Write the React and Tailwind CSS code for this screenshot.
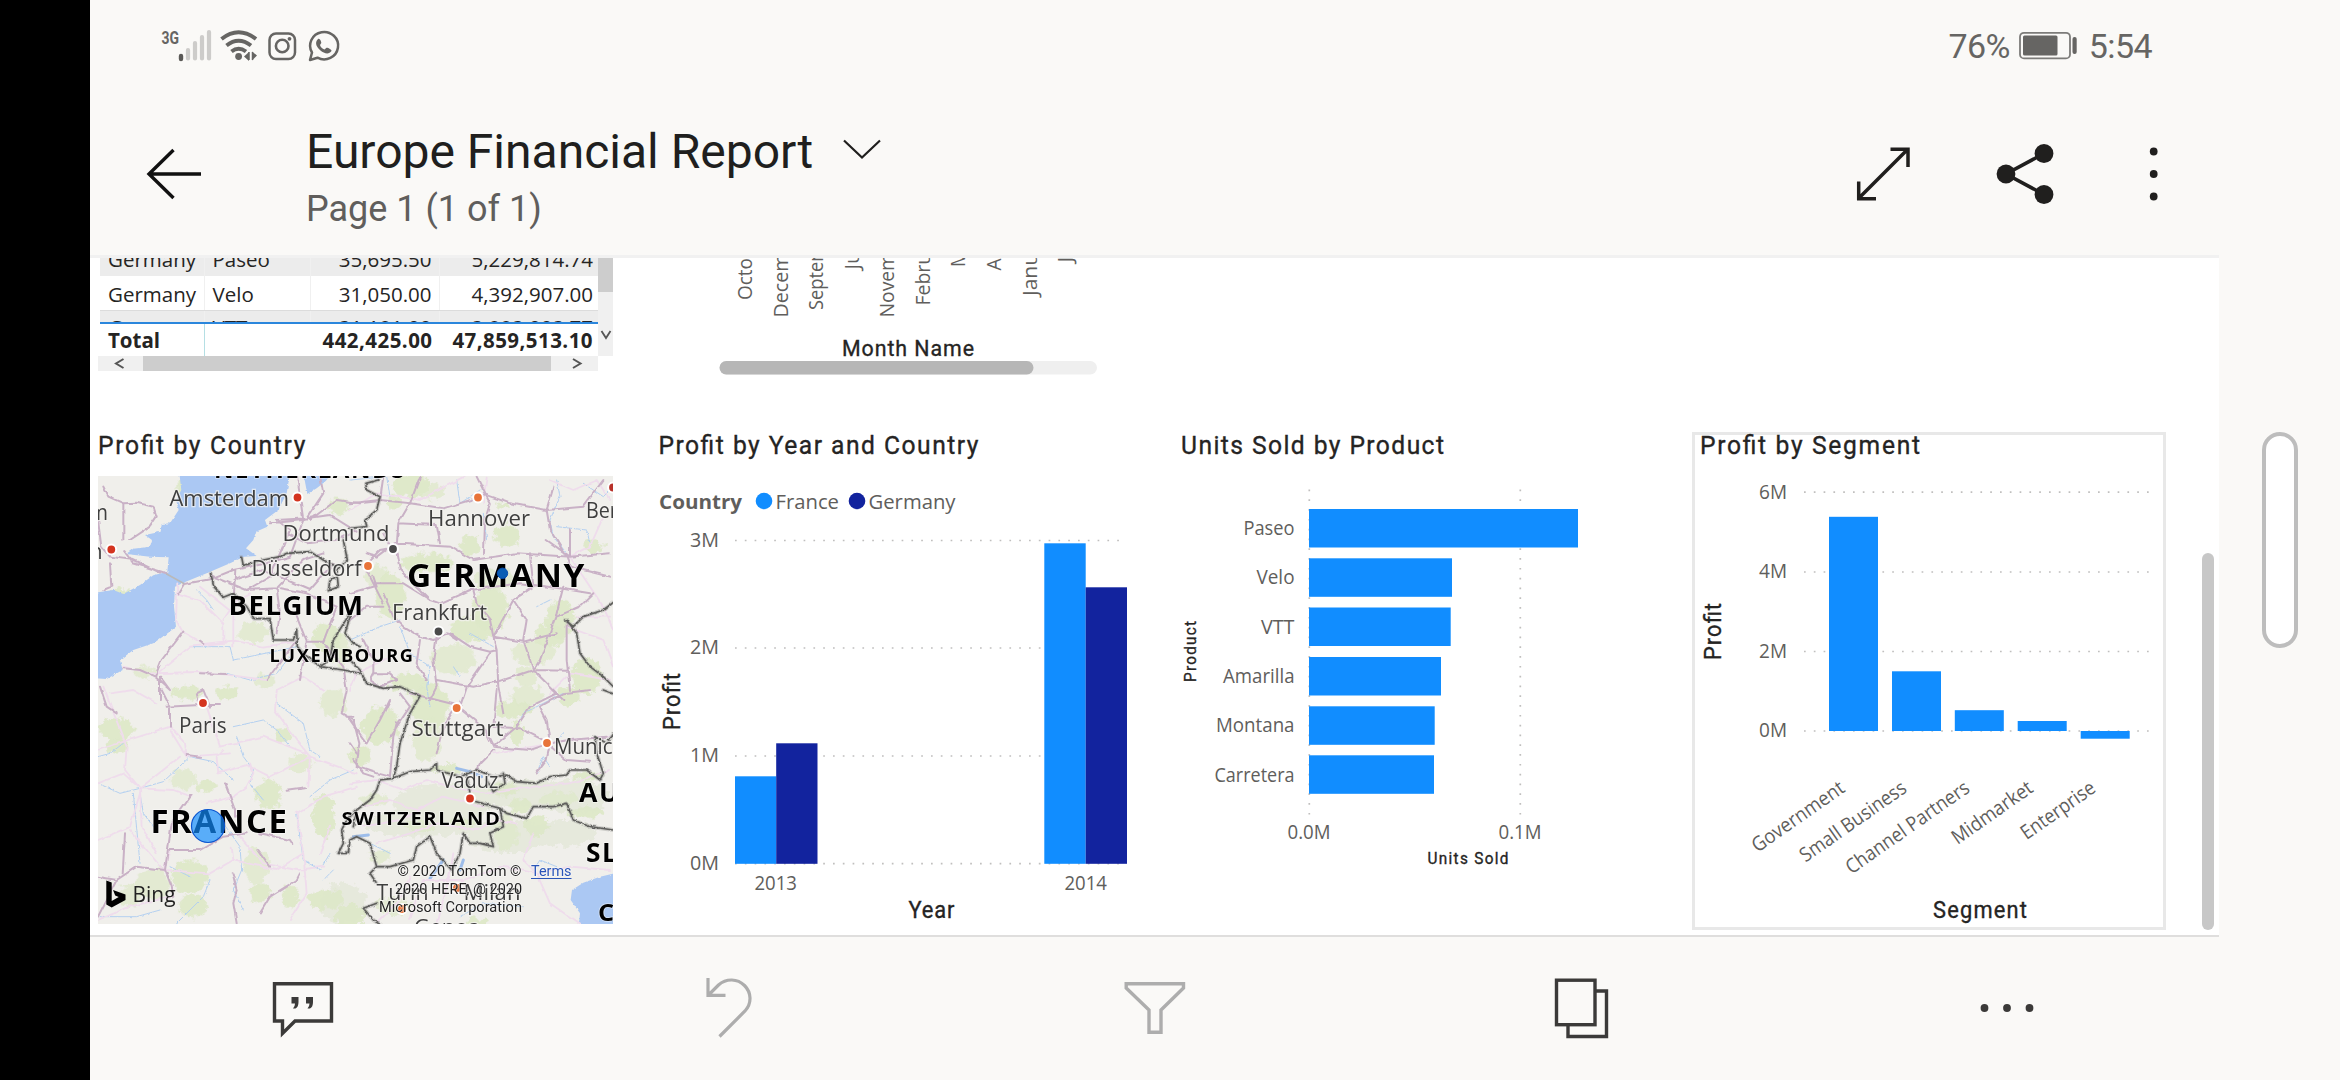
import React from "react";

const SEGOE = '"Open Sans", "Noto Sans", sans-serif';
const DIN = 'Roboto, "Liberation Sans", sans-serif';

/* Chart label: x is the left edge (or right edge when end is set), w the drawn width. */
function Label({ x, y, w, size = 20, color = "#605e5c", font = SEGOE, weight = 400, end, rotate, children }) {
  return (
    <text
      x={x}
      y={y}
      textLength={w}
      lengthAdjust="spacingAndGlyphs"
      fontSize={size}
      fill={color}
      fontFamily={font}
      fontWeight={weight}
      textAnchor={end ? "end" : "start"}
      transform={rotate ? `rotate(${rotate} ${x} ${y})` : undefined}
    >
      {children}
    </text>
  );
}

/* Headings and axis titles: narrow letters with open spacing. */
function Heading({ x, y, w, size = 26.5, rotate, children }) {
  const k = 0.93;
  return (
    <text
      transform={`translate(${x} ${y})${rotate ? ` rotate(${rotate})` : ""} scale(${k} 1)`}
      textLength={w / k}
      lengthAdjust="spacing"
      fontSize={size}
      fill="#252423"
      stroke="#252423"
      strokeWidth="0.35"
      fontFamily={DIN}
    >
      {children}
    </text>
  );
}

function Grid({ x1, y1, x2, y2 }) {
  return <line x1={x1} y1={y1} x2={x2} y2={y2} stroke="#c0bfbe" strokeWidth="1.7" strokeDasharray="1.7 8.1" />;
}

/* ---------- Status bar ---------- */

function StatusIcons() {
  return (
    <svg width="184" height="36" viewBox="160 28 184 36" fill="none">
      <text x="161.500" y="43.500" fontSize="18.500" fontWeight="700" fill="#666563" fontFamily={DIN} textLength="17.500" lengthAdjust="spacingAndGlyphs">3G</text>
      <path d="M181 56v3" stroke="#5a5957" strokeWidth="4.4" strokeLinecap="round" />
      <path d="M188 50v8.5M195 43v15.5M202 37v21.5M209 32v26.5" stroke="#cdccca" strokeWidth="4.2" strokeLinecap="round" />
      <g stroke="#666563" strokeWidth="4">
        <path d="M221.500 39q17-13.500 34.500 0" />
        <path d="M226.500 45.500q12-9.500 24.500 0" />
        <path d="M231.500 51.500q7-5.500 14.500 0" />
      </g>
      <circle cx="238.600" cy="56.500" r="3.400" fill="#666563" />
      <path d="M244 56.500l5-4.500v9zM257 55.500l-5-4v9z" fill="#666563" />
      <path d="M249 52v8M252.500 52v8" stroke="#666563" strokeWidth="1.500" />
      <rect x="269.500" y="33.500" width="25.500" height="25.500" rx="6.500" stroke="#666563" strokeWidth="2.500" />
      <circle cx="282.200" cy="46" r="6.300" stroke="#666563" strokeWidth="2.600" />
      <circle cx="289.500" cy="38.800" r="1.900" fill="#666563" />
      <path d="M310 60l2-7.500a14 13.700 0 1 1 5.500 5.200z" stroke="#666563" strokeWidth="2.500" strokeLinejoin="round" />
      <path d="M318 39c-4 4-1 8.500 2.500 11.500s8.500 4.500 11 .5c.5-1.200-3.500-3.500-5-3.200l-2 1.700c-2.200-.8-4-2.500-4.500-4.500l1.300-2c0-1.500-1.500-5-3.300-4z" fill="#666563" />
    </svg>
  );
}

function StatusBar() {
  return (
    <div className="flex h-[92px] items-start justify-between pl-[70px] pr-[67px] text-[#666563]">
      <div className="pt-7">
        <StatusIcons />
      </div>
      <div className="flex items-center pt-[26px] text-[34px] leading-10 tracking-[-0.6px]">
        <span>76%</span>
        <svg className="ml-[9px] mr-3" width="58" height="30" viewBox="2020 31 58 30" fill="none">
          <rect x="2021" y="32.800" width="50" height="25.600" rx="4" stroke="#7c7b79" strokeWidth="1.800" />
          <rect x="2024" y="35.500" width="34.500" height="20" rx="1.500" fill="#666563" />
          <rect x="2073.500" y="37" width="4.200" height="17" rx="2" fill="#666563" />
        </svg>
        <span>5:54</span>
      </div>
    </div>
  );
}

/* ---------- Header ---------- */

function Header() {
  return (
    <header className="flex h-[163px] items-start pl-[56px]">
      <svg className="mt-[54px]" width="56" height="56" viewBox="146 146 56 56" fill="none" stroke="#111" strokeWidth="3.4">
        <path d="M201 174H149M173.500 150l-24.500 24 24.500 24" />
      </svg>
      <div className="ml-[104px] pt-8">
        <div className="flex items-start">
          <h1 className="text-[48px] font-normal leading-[56px] text-[#201f1e]">Europe Financial Report</h1>
          <svg className="ml-7 mt-[14px]" width="40" height="22" viewBox="841 138 40 22" fill="none" stroke="#201f1e" strokeWidth="2.2">
            <path d="M844 140.500l18 17 18-17" />
          </svg>
        </div>
        <p className="mt-[6px] text-[36px] leading-[46px] text-[#605e5c]">Page 1 (1 of 1)</p>
      </div>
      <div className="ml-auto mr-[59px] mt-[50px] flex items-center text-[#201f1e]">
        <svg width="56" height="64" viewBox="1855 142 56 64" fill="none" stroke="currentColor" strokeWidth="3.500">
          <path d="M1859 198l49-49M1890.500 149.200H1908V167M1858.700 181.500v17.300H1876" />
        </svg>
        <svg className="ml-[84px]" width="60" height="64" viewBox="1995 142 60 64" fill="currentColor">
          <path d="M2044 153.500L2006 174l38 20.500" fill="none" stroke="currentColor" strokeWidth="3.600" />
          <circle cx="2044" cy="153.500" r="9.400" />
          <circle cx="2006" cy="174" r="9.400" />
          <circle cx="2044" cy="194.500" r="9.400" />
        </svg>
        <svg className="ml-[93px]" width="12" height="64" viewBox="2148 142 12 64" fill="currentColor">
          <circle cx="2153.700" cy="151.500" r="3.900" />
          <circle cx="2153.700" cy="174" r="3.900" />
          <circle cx="2153.700" cy="196.500" r="3.900" />
        </svg>
      </div>
    </header>
  );
}

/* ---------- Table ---------- */

const cols = "grid grid-cols-[104.500px_106px_129px_158.500px] text-[20.500px]";

function Row({ cells, className }) {
  return (
    <div className={`${cols} ${className}`}>
      <span className="border-r border-[#f0f0f0] pl-2">{cells[0]}</span>
      <span className="border-r border-[#f0f0f0] pl-2">{cells[1]}</span>
      <span className="border-r border-[#f0f0f0] pr-[7px] text-right">{cells[2]}</span>
      <span className="pr-[5px] text-right">{cells[3]}</span>
    </div>
  );
}

function FinanceTable() {
  return (
    <div className="h-[174px] w-[515px] font-['Open_Sans','Noto_Sans',sans-serif] text-[#252423]">
      <div className="flex h-[98px]">
        <div className="ml-[2px] flex w-[498px] flex-col overflow-hidden">
          <div className="flex h-[18px] shrink-0 items-end overflow-hidden bg-[#ececec]">
            <Row className="h-[35px] shrink-0 leading-[36px]" cells={["Germany", "Paseo", "35,695.50", "5,229,814.74"]} />
          </div>
          <Row className="h-[34px] shrink-0 leading-[36px]" cells={["Germany", "Velo", "31,050.00", "4,392,907.00"]} />
          <div className="h-3 shrink-0 overflow-hidden border-t border-[#dcdcdc] bg-[#ececec]">
            <Row className="h-[35px] leading-[32px]" cells={["Germany", "VTT", "31,181.00", "3,883,003.77"]} />
          </div>
          <div className="h-[2px] shrink-0 bg-[#2b86dc]" />
          <div className="grid h-8 shrink-0 grid-cols-[104.500px_235px_158.500px] text-[20.500px] font-bold leading-[33px]">
            <span className="border-r border-[#b5dfe4] pl-2">Total</span>
            <span className="pr-[7px] text-right tracking-[0.450px]">442,425.00</span>
            <span className="pr-[5px] text-right tracking-[0.450px]">47,859,513.10</span>
          </div>
        </div>
        <div className="flex w-[15px] flex-col items-center bg-[#f0f0f0]">
          <div className="h-[34px] w-full bg-[#cdcdcd]" />
          <svg className="mt-9" width="12" height="14" viewBox="0 0 12 14" fill="none" stroke="#555" strokeWidth="1.800">
            <path d="M1.500 3l4.500 7 4.500-7" />
          </svg>
        </div>
      </div>
      <div className="flex h-[15px] w-[500px] items-center bg-[#f0f0f0]">
        <svg width="44.500" height="15" viewBox="0 0 44.500 15" fill="none" stroke="#555" strokeWidth="2">
          <path d="M25.500 3l-7.500 4.500 7.500 4.500" />
        </svg>
        <div className="h-full w-[408.500px] bg-[#cdcdcd]" />
        <svg width="47" height="15" viewBox="0 0 47 15" fill="none" stroke="#555" strokeWidth="2">
          <path d="M22 3l7.500 4.500L22 12" />
        </svg>
      </div>
    </div>
  );
}

/* ---------- Month axis ---------- */

const months = [
  ["October", 752, 300, 72], ["December", 787.500, 317.500, 95], ["September", 823, 310, 94], ["June", 858.500, 269.500, 42],
  ["November", 893.500, 317.500, 95], ["February", 929.500, 305.500, 81], ["March", 965, 267, 55], ["August", 1000.500, 270.500, 62],
  ["January", 1036.500, 296, 74], ["July", 1071.500, 262.500, 35],
];

function MonthAxis() {
  return (
    <svg width="520" height="174" viewBox="653 258 520 174">
      {months.map(([m, x, y, w]) => (
        <Label key={m} x={x} y={y} w={w} rotate={-90}>{m}</Label>
      ))}
      <Heading x={842} y={356} w={132} size={23}>Month Name</Heading>
      <rect x="719.500" y="361" width="377.500" height="13.500" rx="6.700" fill="#efefef" />
      <rect x="719.500" y="361" width="314" height="13.500" rx="6.700" fill="#b6b6b6" />
    </svg>
  );
}

/* ---------- Map ---------- */

const dots = [
  [297.500, 497.500, "#d4341f"], [111.300, 549.500, "#d4341f"], [393, 549, "#4a4a4a"], [368, 566, "#e8743a"], [478, 497.500, "#e8743a"],
  [613, 487.500, "#b8322a"], [438.500, 631.500, "#4a4a4a"], [203, 703, "#d4341f"], [456.700, 708, "#e8743a"], [547, 743, "#e8743a"],
  [470, 798.500, "#d4341f"], [457, 888, "#e8743a"], [402, 909, "#e8743a"],
];

const cities = [
  ["Amsterdam", 169.500, 506, 119.500], ["Dortmund", 282.500, 540.500, 107], ["Düsseldorf", 251.500, 575.500, 110], ["Hannover", 428, 525.500, 102],
  ["Berlin", 586, 517.500, 54], ["Frankfurt", 392, 619.500, 95], ["Paris", 179, 732.500, 47.500], ["Stuttgart", 411.500, 736, 92], ["Munich", 554, 753.500, 71],
  ["Vaduz", 441.500, 788, 57], ["Turin", 376.500, 899.500, 52], ["Milan", 463.500, 899.500, 57], ["Genoa", 414, 935, 66],
];

const countries = [
  ["NETHERLANDS", 214, 477.500, 192, 24], ["BELGIUM", 228.500, 614.500, 136, 27], ["LUXEMBOURG", 269.500, 662, 145, 17.500],
  ["GERMANY", 407, 586.500, 179, 31.500], ["FRANCE", 150.500, 833, 138, 31.500], ["SWITZERLAND", 341.500, 824.800, 160, 18],
  ["AUSTRIA", 579, 802, 124, 27], ["SLOVENIA", 586, 862, 142, 27], ["CROATIA", 598, 921, 122, 23],
];

const forests = [
  [480, 510, 40, 28], [700, 525, 38, 40], [735, 130, 28, 22], [155, 630, 30, 16], [280, 690, 42, 18], [85, 388, 26, 12], [515, 655, 25, 20], [400, 690, 30, 16],
  [265, 70, 14, 20], [740, 560, 26, 46], [950, 70, 50, 30], [900, 120, 22, 18], [1010, 85, 40, 22], [1240, 220, 34, 30], [1130, 250, 26, 30],
  [1200, 350, 60, 28], [1000, 300, 70, 26], [890, 400, 40, 60], [850, 340, 30, 30], [1190, 440, 50, 60], [1140, 500, 60, 34], [1080, 590, 60, 40],
  [1230, 130, 16, 10], [1500, 250, 26, 18], [1320, 570, 56, 32], [1400, 470, 40, 50], [1370, 520, 44, 30], [1300, 640, 30, 26], [1480, 640, 40, 48],
  [950, 660, 54, 24], [1300, 700, 44, 30], [1260, 740, 50, 24], [1010, 730, 50, 60], [1000, 830, 40, 60], [860, 790, 50, 50], [1430, 700, 30, 26],
  [720, 720, 36, 34], [70, 800, 46, 30], [70, 850, 30, 20], [270, 950, 36, 26], [340, 970, 30, 16], [525, 995, 36, 40], [620, 900, 34, 26],
  [570, 820, 26, 18], [690, 1060, 30, 60], [180, 1260, 46, 40], [290, 1240, 50, 44], [300, 1330, 40, 30], [490, 1210, 34, 50], [500, 1290, 26, 26],
  [590, 1300, 22, 30], [110, 1300, 30, 30], [700, 1310, 50, 26], [770, 1360, 40, 30], [840, 1010, 40, 16], [800, 880, 30, 26], [1060, 920, 40, 14],
  [1240, 1110, 30, 50], [1330, 1090, 36, 26], [1230, 980, 40, 16], [1400, 1010, 50, 18], [1480, 1050, 50, 14], [1280, 1030, 30, 20], [860, 1180, 30, 20],
  [1480, 940, 40, 12], [1270, 810, 20, 34], [900, 1330, 50, 24], [1150, 1380, 30, 12], [1110, 1080, 34, 12], [980, 1090, 40, 14],
];

const sea =
  "M268 40L274 90 258 120 266 150 240 190 215 192 212 215 165 225 186 240 180 260 130 266 108 282 180 290 236 292 232 335 190 346 150 375 100 402 70 390 15 398 15 655 50 657 98 630 90 600 130 570 190 550 230 522 258 500 252 440 255 380 280 368 350 340 420 310 462 290 500 288 468 265 490 240 498 215 532 200 525 180 565 150 590 100 600 40Z M640 40L730 40 704 66 680 85 652 102Z M1575 1240L1530 1250 1480 1268 1446 1290 1442 1320 1470 1360 1466 1400 1575 1400Z";

const minorRoads =
  "M262 370L258 480 278 515 340 552 430 542 520 560 620 545 M330 380L430 460 430 560 M400 480L440 420 480 400 M260 400L330 420 400 490 400 540 M100 620L180 640 320 636 410 644 530 660 M190 650L300 560 410 548 M40 680L110 860 105 930 150 985 155 1100 200 1180 M24 970L100 940 150 985 250 990 305 1010 M24 870L240 800 285 850 290 890 M350 740L390 860 520 830 650 880 M400 870L380 890 385 940 470 915 540 950 660 890 800 940 M560 690L555 750 620 840 660 890 655 980 M480 910L490 940 470 980 430 1010 350 1030 M150 985L270 890 M24 1140L120 1100 150 1000 M120 1110L220 1230 240 1170 M220 1230L360 1240 430 1200 425 1160 M430 1200L560 1230 640 1180 620 1060 700 1010 800 980 M640 1180L650 1300 600 1380 M690 1180L720 1100 M24 1380L120 1340 240 1310 M450 1130L520 1210 620 1230 700 1220 M780 690L800 640 900 590 M780 150L860 100 990 120 1140 40 M1190 50L1180 130 M1380 60L1450 90 1520 60 1560 120 M1540 170L1500 260 1440 290 1540 440 1570 510 M1430 500L1540 540 1570 620 M1460 470L1560 470 M780 970L860 960 940 990 1010 960 1100 985 1200 1000 1330 980 1440 970 1560 930 M860 1150L960 1120 1040 1090 1160 1110 1220 1080 1280 1090 M1330 1120L1300 1200 1340 1240 1440 1220 1560 1230 M960 1380L1000 1260 1120 1260 1240 1220 1340 1240 M1040 1400L1080 1240 1090 1180 M1340 1240L1380 1330 1480 1400 M860 1390L930 1320 960 1250 M1210 880L1330 860 1440 840 1560 830 M1380 700L1440 640 1560 660 M560 690L640 650 700 690 M240 810L290 890 420 880 M60 700L130 690 200 730 M820 1040L900 1020 980 1050 1060 1010 1180 1040 M820 1100L930 1080 1010 1040";

const majorRoads =
  "M40 80L55 110 100 130 140 128 190 140 200 170 180 200 120 240 M100 130L100 240 M24 180L34 260 60 290 130 300 210 338 M60 310L64 380 40 390 M100 270L130 310 230 340 M265 400L282 372 360 358 430 330 520 312 600 290 640 180 M436 330L432 400 M360 345L470 390 560 385 570 460 560 520 M430 360L520 330 660 390 730 310 M470 390L540 350 M560 385L640 300 700 280 M570 385L650 400 740 440 M540 350L600 210 560 180 650 175 720 165 800 215 M640 180L620 40 M650 175L700 100 690 48 M640 180L540 190 M590 220L650 250 740 240 790 215 M660 180L740 120 810 130 M740 440L700 545 650 545 620 470 M650 545L630 660 M280 515L215 600 195 650 150 630 100 625 M195 650L240 690 210 650 210 720 M530 660L575 600 620 540 M340 552L330 545 M330 640L410 642 M700 550L760 620 770 690 755 760 790 780 808 850 800 920 860 940 900 950 M30 680L50 740 80 760 M230 740L330 735 390 735 M215 690L240 740 240 800 M330 740L320 700 340 690 360 740 M290 885L330 890 M405 970L420 1010 435 1050 435 1070 M590 992L645 985 M305 1005L245 1090 225 1230 245 1280 250 1310 M240 1170L330 1170 400 1130 470 1120 M508 1120L600 1140 610 1155 M98 1240L105 1120 M24 1250L80 1260 140 1220 225 1230 M24 1370L80 1260 M428 1240L440 1290 430 1330 440 1390 M630 1240L620 1260 540 1310 510 1360 M505 1170L540 1220 M790 770L770 770";

const germanRoads =
  "M780 130L870 120 960 130 1060 145 1190 105 1260 130 1370 150 1480 140 1540 60 M870 120L880 50 M990 50L960 130 925 190 920 260 870 270 820 320 M1160 50L1200 130 1185 180 1182 280 M1370 150L1385 100 1390 80 M1370 150L1380 210 1430 290 1440 320 1560 350 M1440 210L1440 290 1370 240 M925 190L1040 195 1050 250 M910 250L1080 260 1150 300 1280 280 1440 290 1560 280 M830 280L860 290 900 260 880 220 M920 280L930 330 1020 420 1050 430 1140 390 1290 370 1410 385 1500 400 M1320 280L1330 380 1300 400 1270 420 1310 480 1300 540 1330 630 1420 720 M1150 390L1160 430 1200 480 1210 530 1220 570 1225 680 1240 760 M1270 420L1210 530 1300 545 1400 520 M1420 380L1400 460 1350 600 1330 630 1430 632 M1510 400L1470 440 1400 470 M1430 490L1430 600 1440 690 M850 370L940 370 1020 420 M830 330L850 370 880 430 M850 380L780 400 M780 480L830 440 880 440 M850 350L860 380 M880 400L910 470 940 500 990 530 1030 540 1080 520 1140 560 1200 575 1220 570 M1040 530L1030 600 1040 680 1020 720 M1070 520L1100 540 M990 540L980 610 1010 660 M1200 580L1130 680 1110 740 M1040 660L1150 680 1240 660 1330 630 M840 660L850 640 900 640 920 660 870 680 840 660 M850 640L850 600 820 540 M960 700L1100 735 1180 800 1210 860 1280 800 1320 740 1400 700 M1100 735L1060 800 1040 880 M1210 860L1320 870 1380 850 1440 840 1550 830 M1210 800L1290 805 1380 850 1370 900 1340 940 M1210 870L1170 910 1160 930 M1380 850L1370 780 1350 740 1420 700 1500 690 M1370 850L1430 900 1500 905 M1220 690L1210 800 M900 830L960 740 930 700 M780 780L830 850 870 780 900 720 M790 900L820 940 850 950 M900 950L910 830 920 790 M780 850L800 880";

const rivers =
  "M108 282L150 276 190 262 M24 970L90 1000 150 985 220 965 300 890 370 905 430 960 M150 1000L160 1060 190 1100 M430 800L520 780 560 810 600 860 M440 830L460 890 490 930 480 970 520 1020 M560 730L640 790 660 870 690 890 M320 390L350 420 370 450 M410 640L480 660 560 640 600 590 M300 560L420 560 430 600 620 560 M400 1090L450 1160 455 1230 430 1290 460 1350 M620 1060L640 1200 690 1230 720 1180 M660 1010L720 960 790 930 M130 1000L150 1210 M24 890L60 880 100 850 M240 1220L300 1250 M24 1370L140 1370 210 1350 M260 1390L340 1310 360 1260 M780 60L890 50 900 110 M1100 60L1110 130 1170 90 M1180 160L1190 240 M1400 60L1410 110 1380 180 1390 230 1430 280 M1480 70L1540 110 1560 90 M1400 200L1490 210 1500 250 M780 540L870 500 930 480 M930 500L960 580 1020 620 1010 680 1020 740 M1140 520L1210 560 M1090 620L1110 650 M1340 440L1380 420 M700 1260L730 1230 M840 1150L900 1180 M1340 940L1360 890 1380 920 M1400 840L1420 820 M1280 800L1300 760 1420 700 M1330 1230L1350 1200 1400 1220 M1110 1370L1180 1330 1300 1340";

const borders =
  "M362 340L372 380 400 412 430 400 470 440 492 476 540 476 550 540 610 540 620 508 622 560 M455 292L460 316 520 300 570 290 590 280 660 275 700 300 740 320 M760 240L772 300 740 330 745 380 715 392 720 360 740 350 M780 460L730 540 720 600 690 620 760 630 810 640 M780 470L765 520 790 550 810 560 M780 205L830 200 826 180 860 150 870 110 830 90 828 70 864 60 M690 620L640 580 622 560 M780 600L810 630 830 670 880 685 930 680 990 708 960 760 930 850 920 920 910 955 870 960 860 990 840 1020 800 1050 790 1100 M1425 480L1450 500 1480 470 1540 450 1580 420 M1430 480L1460 520 1470 580 1500 620 1540 650 1580 690 M1540 690L1580 705 M1580 810L1550 850 1515 830 1520 880 1540 940 1530 960 1490 930 1440 930 1430 945 1380 950 1340 970 1280 965 1250 945 1210 950 1160 930 1110 950 1040 930 1040 910 1020 930 960 935 910 955 M1130 940L1140 1000 1140 1020 1230 1045 1250 1060 1310 1075 1330 1040 1390 1040 1430 1030 1450 1080 1500 1100 1570 1110 M1240 940L1245 970 1210 995 1190 960 M1230 1045L1240 1100 1200 1120 1210 1160 1170 1150 1140 1150 1120 1120 1110 1180 1085 1230 1040 1180 1020 1130 980 1160 970 1200 900 1220 860 1220 840 1150 800 1130 780 1140 M800 1050L770 1080 755 1110 760 1150 745 1180 775 1180 780 1140 M860 1220L840 1240 860 1270 M860 1330L820 1345 850 1380 880 1400";

const ridges = [
  [1060, 1030, 150, 60], [1000, 1090, 180, 40], [1300, 1000, 170, 40], [1450, 1010, 110, 50], [1250, 1130, 120, 50], [760, 1330, 70, 60], [1420, 1120, 100, 40],
];

function MapVisual() {
  return (
    <svg width="515" height="448" viewBox="98 476 515 448" className="mt-1">
      <defs>
        <filter id="coast" x="-5%" y="-5%" width="110%" height="110%">
          <feTurbulence type="fractalNoise" baseFrequency="0.09" numOctaves="3" seed="4" result="n" />
          <feDisplacementMap in="SourceGraphic" in2="n" scale="8" xChannelSelector="R" yChannelSelector="G" />
        </filter>
        <filter id="wood" x="-5%" y="-5%" width="110%" height="110%">
          <feTurbulence type="fractalNoise" baseFrequency="0.05" numOctaves="4" seed="9" result="n" />
          <feDisplacementMap in="SourceGraphic" in2="n" scale="34" xChannelSelector="R" yChannelSelector="G" />
        </filter>
        <filter id="road" x="-5%" y="-5%" width="110%" height="110%">
          <feTurbulence type="fractalNoise" baseFrequency="0.035" numOctaves="2" seed="2" result="n" />
          <feDisplacementMap in="SourceGraphic" in2="n" scale="11" xChannelSelector="R" yChannelSelector="G" />
        </filter>
      </defs>
      <rect x="98" y="476" width="515" height="448" fill="#f0efeb" />
      <g transform="translate(90 460) scale(.33333)" fill="none" strokeLinejoin="round" strokeLinecap="round">
        <g filter="url(#wood)" fill="#e6e9dc">
          {ridges.map(([x, y, rx, ry]) => (
            <ellipse key={`${x}-${y}`} cx={x} cy={y} rx={rx} ry={ry} />
          ))}
        </g>
        <g filter="url(#wood)" fill="#dde8c8">
          {forests.map(([x, y, rx, ry], i) => (
            <ellipse key={i} cx={x + 10} cy={y + 8} rx={rx * 1.12} ry={ry * 1.12} opacity={i % 3 ? 0.95 : 0.7} />
          ))}
        </g>
        <path d={rivers} stroke="#b4d0f0" strokeWidth="3" filter="url(#coast)" />
        <path d={sea} fill="#abc8f3" filter="url(#coast)" />
        <path d="M1100 925L1140 935 1175 950 M1020 1255L1060 1200 M790 1130L835 1125 M1120 1200L1110 1230" stroke="#9dbdea" strokeWidth="9" />
        <g filter="url(#road)">
          <path d={minorRoads} stroke="#efdcec" strokeWidth="5.500" />
          <path d={majorRoads} stroke="#c9b1c6" strokeWidth="6" />
          <path d={germanRoads} stroke="#c9b1c6" strokeWidth="6" />
        </g>
        <path d="M230 342L280 370" stroke="#b9b9b9" strokeWidth="5" />
        <g filter="url(#coast)">
          <path d={borders} stroke="#8b8b89" strokeOpacity=".35" strokeWidth="12" />
          <path d={borders} stroke="#5f5f5d" strokeWidth="5" />
        </g>
      </g>
      {dots.map(([x, y, c]) => (
        <circle key={`${x}-${y}`} cx={x} cy={y} r="4.900" fill={c} stroke="#fff" strokeWidth="2" />
      ))}
      <g stroke="#f4f3f0" strokeWidth="2.400" strokeOpacity=".75" paintOrder="stroke">
        <Label x={108} y={520} w={118} size={22.500} color="#3f3f3f" end>Birmingham</Label>
        <Label x={102.700} y={558.500} w={76} size={22.500} color="#3f3f3f" end>London</Label>
        {cities.map(([t, x, y, w]) => (
          <Label key={t} x={x} y={y} w={w} size={22.500} color="#3f3f3f">{t}</Label>
        ))}
      </g>
      <g letterSpacing="1.500" stroke="#fff" strokeOpacity=".5" strokeWidth="1.500" paintOrder="stroke">
        {countries.map(([t, x, y, w, s]) => (
          <Label key={t} x={x} y={y} w={w} size={s} color="#000" weight={700}>{t}</Label>
        ))}
      </g>
      <circle cx="502.500" cy="573.300" r="5.200" fill="#0b5fb4" stroke="#0a4fae" strokeWidth="1" />
      <circle cx="208" cy="826" r="16.500" fill="#118dff" fillOpacity=".68" stroke="#0b55cf" strokeWidth="1.200" />
      <path d="M106.300 880.500l5.400 2v18.500l7-4-3.500-1.600-2.200-5.500 12.500 4.500v5.500l-13.800 7.600-5.400-3z" fill="#000" />
      <Label x={132.500} y={902} w={43} size={22.500} color="#222">Bing</Label>
      <g stroke="#fff" strokeOpacity=".5" strokeWidth="1.500" paintOrder="stroke">
        <Label x={397.500} y={876} w={124} size={15} color="#222" font={DIN}>© 2020 TomTom ©</Label>
        <Label x={395} y={894} w={127} size={15} color="#222" font={DIN}>2020 HERE, @ 2020</Label>
        <Label x={379} y={911.500} w={143} size={15} color="#222" font={DIN}>Microsoft Corporation</Label>
        <Label x={531} y={876} w={40.500} size={15} color="#2a55b8" font={DIN}>Terms</Label>
      </g>
      <path d="M531 878.500h40.500" stroke="#2a55b8" strokeWidth="1" />
    </svg>
  );
}

/* ---------- Charts ---------- */

function ProfitByYear() {
  const ticks = [["3M", 547, 540.500], ["2M", 654, 648], ["1M", 761.700, 756], ["0M", 869.700, 863.700]];
  return (
    <svg width="520" height="503" viewBox="653 432 520 503">
      <Heading x={658.500} y={454} w={320}>Profit by Year and Country</Heading>
      <Label x={659} y={508.700} w={83} weight={700}>Country</Label>
      <circle cx="764" cy="501" r="8.300" fill="#118dff" />
      <Label x={775.500} y={508.700} w={63.500}>France</Label>
      <circle cx="857" cy="501" r="8.300" fill="#12239e" />
      <Label x={868.500} y={508.700} w={87}>Germany</Label>
      {ticks.map(([t, y, g]) => (
        <React.Fragment key={t}>
          <Label x={719} y={y} w={29} size={19.500} end>{t}</Label>
          <Grid x1={735} y1={g} x2={1120} y2={g} />
        </React.Fragment>
      ))}
      <rect x="735" y="776.300" width="41.200" height="87.500" fill="#118dff" />
      <rect x="776.200" y="743.300" width="41.300" height="120.500" fill="#12239e" />
      <rect x="1044.300" y="543.300" width="41.400" height="320.500" fill="#118dff" />
      <rect x="1085.700" y="587.300" width="41.300" height="276.500" fill="#12239e" />
      <Label x={754.500} y={890} w={42.500}>2013</Label>
      <Label x={1064.500} y={890} w={42.500}>2014</Label>
      <Heading x={908.500} y={918} w={46} size={23.500}>Year</Heading>
      <Heading x={680} y={730} w={57} size={23.500} rotate={-90}>Profit</Heading>
    </svg>
  );
}

function UnitsSold() {
  const rows = [
    ["Paseo", 509, 1578, 535, 51], ["Velo", 558.300, 1452, 584, 38], ["VTT", 607.500, 1450.700, 634, 33.500],
    ["Amarilla", 657, 1441, 683, 71.500], ["Montana", 706.300, 1434.700, 732, 78.500], ["Carretera", 755.300, 1434, 782, 80],
  ];
  return (
    <svg width="519" height="503" viewBox="1173 432 519 503">
      <Heading x={1181} y={454} w={263}>Units Sold by Product</Heading>
      <Grid x1={1309.300} y1={489.500} x2={1309.300} y2={816} />
      <Grid x1={1520.300} y1={489.500} x2={1520.300} y2={816} />
      {rows.map(([t, y, r, b, w]) => (
        <React.Fragment key={t}>
          <rect x="1309" y={y} width={r - 1309} height="38.500" fill="#118dff" />
          <Label x={1294.500} y={b} w={w} end>{t}</Label>
        </React.Fragment>
      ))}
      <Label x={1287.500} y={838.700} w={43}>0.0M</Label>
      <Label x={1498.500} y={838.700} w={43}>0.1M</Label>
      <Heading x={1427.500} y={864} w={81} size={16.500}>Units Sold</Heading>
      <Heading x={1196} y={682} w={61} size={16.500} rotate={-90}>Product</Heading>
    </svg>
  );
}

function ProfitBySegment() {
  const ticks = [["6M", 498.600, 492.200], ["4M", 577.800, 572], ["2M", 658, 651.500], ["0M", 737, 731]];
  const bars = [[1829, 516.800, 214.200], [1892, 671.300, 59.700], [1954.800, 710.200, 20.800], [2017.700, 721, 10], [2080.700, 731, 7.700]];
  const names = [["Government", 1846, 108], ["Small Business", 1908, 125], ["Channel Partners", 1971, 146], ["Midmarket", 2034.500, 94], ["Enterprise", 2097, 86]];
  return (
    <svg width="474" height="498" viewBox="1692 432 474 498">
      <rect x="1693.500" y="433.500" width="471" height="495" fill="#fff" stroke="#e8e8e8" strokeWidth="3" />
      <Heading x={1700} y={454} w={220}>Profit by Segment</Heading>
      {ticks.map(([t, y, g]) => (
        <React.Fragment key={t}>
          <Label x={1787} y={y} w={28} size={19.500} end>{t}</Label>
          <Grid x1={1804} y1={g} x2={2149} y2={g} />
        </React.Fragment>
      ))}
      {bars.map(([x, y, h]) => (
        <rect key={x} x={x} y={y} width="49" height={h} fill="#118dff" />
      ))}
      {names.map(([t, x, w]) => (
        <Label key={t} x={x} y={791} w={w} end rotate={-35}>{t}</Label>
      ))}
      <Heading x={1933} y={918} w={94} size={23.500}>Segment</Heading>
      <Heading x={1720.500} y={660} w={57} size={23.500} rotate={-90}>Profit</Heading>
    </svg>
  );
}

function Report() {
  return (
    <main className="flex h-[677px] overflow-hidden bg-white">
      <div className="flex w-[2084px] shrink-0 flex-col pl-2">
        <div className="flex h-[174px]">
          <FinanceTable />
          <div className="ml-10">
            <MonthAxis />
          </div>
        </div>
        <div className="flex h-[503px] items-start">
          <div className="flex w-[555px] shrink-0 flex-col">
            <svg width="515" height="40" viewBox="98 432 515 40">
              <Heading x={98} y={454} w={207.500}>Profit by Country</Heading>
            </svg>
            <MapVisual />
          </div>
          <ProfitByYear />
          <UnitsSold />
          <ProfitBySegment />
        </div>
      </div>
      <div className="ml-7 mt-[295px] h-[377px] w-3 rounded-full bg-[#c7c7c7]" />
    </main>
  );
}

/* ---------- Bottom toolbar ---------- */

function Toolbar() {
  return (
    <nav className="grid h-[143px] grid-cols-5 justify-items-center pt-[35px] text-[#3b3a39]">
      <svg width="66" height="70" viewBox="270 972 66 70" fill="none" stroke="currentColor" strokeWidth="3.400">
        <path d="M274.500 983.700h57v37.300h-36.500l-12.500 12.500v-12.500h-8z" />
        <path d="M291.500 997h7v5q0 5-3 6.500h-2.500q2-2 2-5h-3.500zM306 997h7v5q0 5-3 6.500h-2.500q2-2 2-5h-3.500z" fill="currentColor" stroke="none" />
      </svg>
      <svg width="66" height="70" viewBox="696 972 66 70" fill="none" stroke="#adadad" strokeWidth="3.200">
        <path d="M708 978v17.300h17.500M708.500 995l10-10c8-7 19-6.500 26 .5s7.500 18 .5 25.500l-25.500 25.500" />
      </svg>
      <svg width="66" height="70" viewBox="1121 972 66 70" fill="none" stroke="#adadad" strokeWidth="3.400">
        <path d="M1126.200 983.700h57.300v4.300l-22.500 22v22.300h-12v-22.300l-22.800-22z" />
      </svg>
      <svg width="66" height="70" viewBox="1547 972 66 70" fill="none" stroke="currentColor" strokeWidth="3.400">
        <rect x="1556.500" y="980.200" width="38.500" height="44.500" />
        <path d="M1596 991h10.500v45.500h-38.500v-11" />
      </svg>
      <svg width="66" height="70" viewBox="1973 972 66 70" fill="currentColor">
        <circle cx="1984.500" cy="1008" r="3.900" />
        <circle cx="2007" cy="1008" r="3.900" />
        <circle cx="2029.500" cy="1008" r="3.900" />
      </svg>
    </nav>
  );
}

export default function App() {
  return (
    <div className="flex h-[1080px] w-[2340px] overflow-hidden bg-[#faf9f7] font-[Roboto,'Liberation_Sans',sans-serif]">
      <div className="w-[90px] shrink-0 bg-black" />
      <div className="flex w-[2129px] shrink-0 flex-col">
        <StatusBar />
        <Header />
        <div className="h-[3px] bg-[#f1f1f1]" />
        <Report />
        <div className="h-[2px] bg-[#dfdedd]" />
        <Toolbar />
      </div>
      <div className="pl-[43px] pt-[432px]">
        <div className="h-[216px] w-9 rounded-full border-[4.500px] border-[#bdbdbd] bg-white" />
      </div>
    </div>
  );
}
